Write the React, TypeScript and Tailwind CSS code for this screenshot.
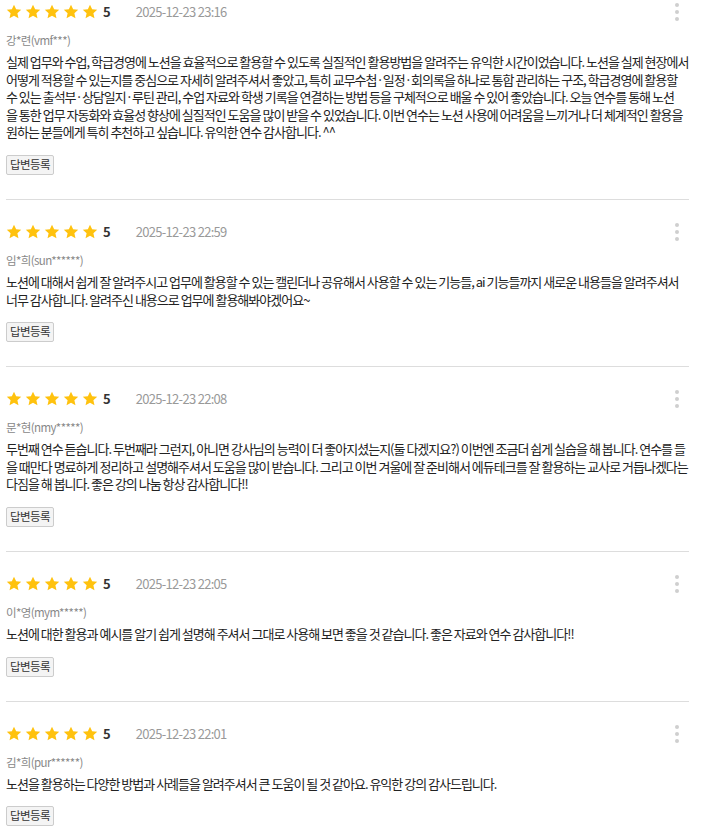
import React from "react";

type Review = {
  date: string;
  name: string;
  body: string;
};

const reviews: Review[] = [
  {
    date: "2025-12-23 23:16",
    name: "강*련(vmf***)",
    body: "실제 업무와 수업, 학급경영에 노션을 효율적으로 활용할 수 있도록 실질적인 활용방법을 알려주는 유익한 시간이었습니다. 노션을 실제 현장에서 어떻게 적용할 수 있는지를 중심으로 자세히 알려주셔서 좋았고, 특히 교무수첩·일정·회의록을 하나로 통합 관리하는 구조, 학급경영에 활용할 수 있는 출석부·상담일지·루틴 관리, 수업 자료와 학생 기록을 연결하는 방법 등을 구체적으로 배울 수 있어 좋았습니다. 오늘 연수를 통해 노션\n을 통한 업무 자동화와 효율성 향상에 실질적인 도움을 많이 받을 수 있었습니다. 이번 연수는 노션 사용에 어려움을 느끼거나 더 체계적인 활용을 원하는 분들에게 특히 추천하고 싶습니다. 유익한 연수 감사합니다. ^^",
  },
  {
    date: "2025-12-23 22:59",
    name: "임*희(sun******)",
    body: "노션에 대해서 쉽게 잘 알려주시고 업무에 활용할 수 있는 캘린더나 공유해서 사용할 수 있는 기능들, ai 기능들까지 새로운 내용들을 알려주셔서 너무 감사합니다. 알려주신 내용으로 업무에 활용해봐야겠어요~",
  },
  {
    date: "2025-12-23 22:08",
    name: "문*현(nmy*****)",
    body: "두번째 연수 듣습니다. 두번째라 그런지, 아니면 강사님의 능력이 더 좋아지셨는지(둘 다겠지요?) 이번엔 조금더 쉽게 실습을 해 봅니다. 연수를 들을 때만다 명료하게 정리하고 설명해주셔서 도움을 많이 받습니다. 그리고 이번 겨울에 잘 준비해서 에듀테크를 잘 활용하는 교사로 거듭나겠다는 다짐을 해 봅니다. 좋은 강의 나눔 항상 감사합니다!!",
  },
  {
    date: "2025-12-23 22:05",
    name: "이*영(mym*****)",
    body: "노션에 대한 활용과 예시를 알기 쉽게 설명해 주셔서 그대로 사용해 보면 좋을 것 같습니다. 좋은 자료와 연수 감사합니다!!",
  },
  {
    date: "2025-12-23 22:01",
    name: "김*희(pur******)",
    body: "노션을 활용하는 다양한 방법과 사례들을 알려주셔서 큰 도움이 될 것 같아요. 유익한 강의 감사드립니다.",
  },
];

const Star = () => (
  <svg viewBox="0 0 24 24" className="w-4 h-4" fill="#FFC20E">
    <path d="M12 1l3.2 7 7.6.8-5.7 5.1 1.6 7.5L12 17.6l-6.7 3.8 1.6-7.5L1.2 8.8 8.8 8z" />
  </svg>
);

const ReviewItem = ({ r, first, last }: { r: Review; first: boolean; last: boolean }) => {
  return (
    <div className={`${first ? "" : "pt-5"} ${last ? "pb-3" : "pb-6 border-b border-[#dddddd]"}`}>
      <div className="h-6 flex items-center relative">
        <div className="flex items-center gap-[3px]">
          <Star />
          <Star />
          <Star />
          <Star />
          <Star />
        </div>
        <span className="ml-[5px] text-[13px] font-bold text-[#333]">5</span>
        <span className="ml-[25px] text-[13px] tracking-[-0.7px] text-[#999]">{r.date}</span>
        {/* more menu */}
        <div className="absolute right-[10px] top-[3px] flex flex-col gap-[3px]">
          <span className="w-1 h-1 rounded-full bg-[#cfcfcf]" />
          <span className="w-1 h-1 rounded-full bg-[#cfcfcf]" />
          <span className="w-1 h-1 rounded-full bg-[#cfcfcf]" />
        </div>
      </div>
      <p className="mt-[7px] text-[11.5px] leading-[18px] tracking-[-0.6px] text-[#888]">{r.name}</p>
      <p className="mt-1 text-[13px] leading-[17.6px] text-[#222] tracking-[-1px] break-all whitespace-pre-line">
        {r.body}
      </p>
      <button className="mt-[14px] h-5 px-[3px] border border-[#cccccc] bg-[#f4f4f4] rounded-[2px] text-[11.5px] tracking-[-0.6px] leading-none text-[#333]">
        답변등록
      </button>
    </div>
  );
};

export default function App() {
  return (
    <div className="w-full bg-white" style={{ fontFamily: '"Noto Sans CJK KR", "Noto Sans", sans-serif' }}>
      <div className="pl-[6px] pr-[12px]">
        {reviews.map((r, i) => (
          <ReviewItem key={i} r={r} first={i === 0} last={i === reviews.length - 1} />
        ))}
      </div>
    </div>
  );
}
